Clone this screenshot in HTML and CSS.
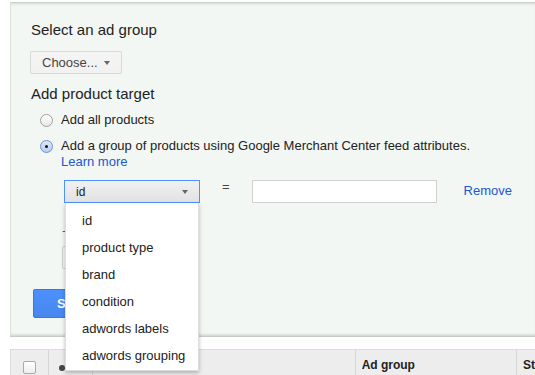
FILE: index.html
```html
<!DOCTYPE html>
<html>
<head>
<meta charset="utf-8">
<link rel="stylesheet" href="styles.css">
</head>
<body>
<div class="panel">
  <h2 class="title">Select an ad group</h2>
  <button class="choose">Choose... <span class="caret"></span></button>
  <h2 class="title t2">Add product target</h2>
  <div class="radios">
    <div class="radio"><span class="rb"></span><span class="rtext">Add all products</span></div>
    <div class="radio"><span class="rb on"></span><span class="rtext">Add a group of products using Google Merchant Center feed attributes.<br><a class="link" href="#">Learn more</a></span></div>
  </div>
  <div class="cond">
    <div class="sel-wrap">
      <div class="select"><span>id</span><span class="caret"></span></div>
      <ul class="menu">
        <li>id</li>
        <li>product type</li>
        <li>brand</li>
        <li>condition</li>
        <li>adwords labels</li>
        <li>adwords grouping</li>
      </ul>
    </div>
    <span class="eq">=</span>
    <div class="input"></div>
    <a class="link remove" href="#">Remove</a>
  </div>
  <a class="add" href="#">+</a>
  <button class="ghost"></button>
  <button class="save">S</button>
</div>
<div class="thead">
  <div class="cell c-check"><span class="cb"></span></div>
  <div class="cell c-dot"><span class="dot"></span></div>
  <div class="cell c-name"></div>
  <div class="cell c-group">Ad group</div>
  <div class="cell c-st">St</div>
</div>
</body>
</html>
```
FILE: styles.css
```css
html, body {
  margin: 0;
  padding: 0;
  background: #fff;
  font-family: "Liberation Sans", Arial, sans-serif;
  color: #222;
  overflow: hidden;
}
.panel {
  margin: 2px 0 0 10px;
  height: 335px;
  box-sizing: border-box;
  background: #f3f7f3;
  border-top: 1px solid #c9cfc9;
  border-left: 1px solid #dde2dd;
  box-shadow: inset 0 3px 3px -2px rgba(0,0,0,0.12), inset 0 -3px 3px -2px rgba(0,0,0,0.18);
  border-bottom: 1px solid #c3cbc3;
  padding: 18px 0 0 20px;
  position: relative;
}
.title {
  margin: 0;
  font-size: 15px;
  font-weight: normal;
  line-height: 18px;
  color: #222;
}
.t2 { margin-top: 11px; }
.choose {
  margin-top: 12px;
  height: 23px;
  width: 92px;
  margin-left: -1px;
  border: 1px solid #d9d9d9;
  border-radius: 2px;
  background: linear-gradient(#f5f5f5, #f1f1f1);
  font-family: inherit;
  font-size: 13px;
  color: #444;
  padding: 0 0 0 11px;
  text-align: left;
  display: flex;
  align-items: center;
  gap: 6px;
}
.caret {
  display: inline-block;
  width: 0;
  height: 0;
  border-left: 3.5px solid transparent;
  border-right: 3.5px solid transparent;
  border-top: 4px solid #666;
}
.radios {
  margin-top: 9px;
  margin-left: 9px;
  display: flex;
  flex-direction: column;
  gap: 10px;
}
.radio {
  display: flex;
  align-items: flex-start;
  gap: 8px;
  font-size: 13px;
  line-height: 16px;
  color: #222;
}
.rb {
  width: 11px;
  height: 11px;
  border: 1px solid #a0a0a0;
  border-radius: 50%;
  background: linear-gradient(#fff, #e6e6e6);
  margin-top: 2px;
  flex: none;
  position: relative;
}
.rb.on {
  border-color: #6d8fc9;
  background: linear-gradient(#dce8f8, #b9cff0);
}
.rb.on::after {
  content: "";
  position: absolute;
  left: 4px;
  top: 4px;
  width: 3px;
  height: 3px;
  border-radius: 50%;
  background: #111;
}
.rtext { display: block; }
.link {
  color: #2156cf;
  text-decoration: none;
}
.cond {
  margin-top: 10px;
  margin-left: 33px;
  display: flex;
  align-items: flex-start;
  height: 23px;
}
.sel-wrap {
  position: relative;
  width: 136px;
}
.select {
  height: 23px;
  box-sizing: border-box;
  border: 1px solid #4d90fe;
  background: linear-gradient(#f1f1f1, #e2e2e2);
  display: flex;
  align-items: center;
  justify-content: space-between;
  padding: 0 11px 0 11px;
  font-size: 12px;
  color: #222;
}
.menu {
  position: absolute;
  left: 1px;
  top: 23px;
  width: 134px;
  margin: 0;
  padding: 4px 0 1px 0;
  list-style: none;
  background: #fff;
  box-shadow: 0 2px 4px rgba(0,0,0,0.25);
  border: 1px solid #ddd;
  border-top: none;
  box-sizing: border-box;
  z-index: 5;
}
.menu li {
  font-size: 13px;
  line-height: 27px;
  padding-left: 16px;
  color: #222;
}
.eq {
  margin-left: 22px;
  font-size: 13px;
  line-height: 14px;
  color: #444;
}
.input {
  margin-left: 22px;
  width: 185px;
  height: 23px;
  box-sizing: border-box;
  border: 1px solid #d0d0d0;
  background: #fff;
}
.remove {
  margin-left: 27px;
  font-size: 13px;
  line-height: 21px;
}
.add {
  display: block;
  margin: 21px 0 0 31px;
  font-size: 13px;
  color: #7a35c9;
  text-decoration: none;
  line-height: 16px;
}
.ghost {
  display: block;
  margin: 6px 0 0 31px;
  height: 23px;
  width: 70px;
  border: 1px solid #d0d0d0;
  border-radius: 2px;
  background: #f5f5f5;
  font-size: 12px;
}
.save {
  display: block;
  margin: 20px 0 0 2px;
  height: 29px;
  width: 70px;
  border: 1px solid #3079ed;
  border-radius: 2px;
  background: linear-gradient(#4d90fe, #4787ed);
  color: #fff;
  font-family: inherit;
  font-weight: bold;
  font-size: 13px;
  text-align: left;
  padding-left: 23px;
}
.thead {
  margin: 12px 0 0 10px;
  height: 40px;
  background: #ededed;
  border-top: 1px solid #dcdcdc;
  border-left: 1px solid #dcdcdc;
  display: flex;
}
.cell {
  box-sizing: border-box;
  border-right: 1px solid #d6d6d6;
  display: flex;
  align-items: flex-start;
  padding-top: 8px;
  font-size: 12px;
  font-weight: bold;
  color: #222;
}
.c-check { width: 38px; justify-content: center; padding-top: 11px; }
.cb {
  width: 11px;
  height: 11px;
  border: 1px solid #aaa;
  border-radius: 2px;
  background: linear-gradient(#fff, #eee);
}
.c-dot { width: 44px; padding-left: 10px; padding-top: 15px; }
.dot {
  width: 6px;
  height: 6px;
  border-radius: 50%;
  background: #444;
}
.c-name { width: 264px; }
.c-group { width: 162px; padding-left: 6px; }
.c-st { border-right: none; padding-left: 6px; flex: 1; }
```
